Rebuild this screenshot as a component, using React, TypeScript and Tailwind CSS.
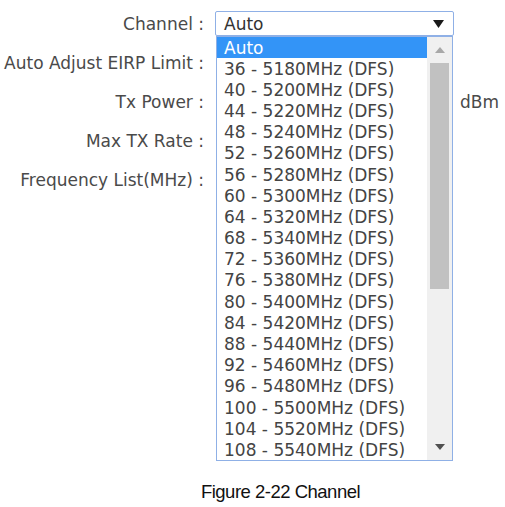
// Wireless settings form with the Channel select opened.

const channels = [
  36, 40, 44, 48, 52, 56, 60, 64, 68, 72, 76, 80, 84, 88, 92, 96, 100, 104, 108,
]

const labels = [
  'Channel :',
  'Auto Adjust EIRP Limit :',
  'Tx Power :',
  'Max TX Rate :',
  'Frequency List(MHz) :',
]

function ChannelSelect() {
  return (
    <div className="relative ml-[10px] w-[239px]">
      <div className="flex h-[25px] items-center justify-between rounded-[2px] border border-[#8fb0e6] bg-white pl-[8px] pr-[9px] text-[#333]">
        <span>Auto</span>
        <svg width="11" height="8" viewBox="0 0 11 8">
          <path d="M0 0h11L5.5 8z" fill="#1a1a1a" />
        </svg>
      </div>

      <div className="absolute left-[1px] top-[25px] flex h-[425px] w-[237px] border border-[#8fb0e6] bg-white">
        <ul className="flex-1">
          <li className="flex h-[21px] items-center bg-[#3394f7] pl-[7px] text-white">Auto</li>
          {channels.map((ch) => (
            <li key={ch} className="flex h-[21.2px] items-center whitespace-nowrap pl-[7px] text-[#444]">
              {ch} - {5000 + ch * 5}MHz (DFS)
            </li>
          ))}
        </ul>
        <div className="flex w-[25px] flex-col items-center bg-[#f0f0f0]">
          <div className="flex h-[26px] w-full items-center justify-center">
            <svg width="10" height="6" viewBox="0 0 10 6">
              <path d="M5 0l5 6H0z" fill="#a8a8a8" />
            </svg>
          </div>
          <div className="h-[226px] w-[19px] bg-[#c1c1c1]" />
          <div className="flex-1" />
          <div className="flex h-[26px] w-full items-center justify-center">
            <svg width="10" height="6" viewBox="0 0 10 6">
              <path d="M0 0h10L5 6z" fill="#505050" />
            </svg>
          </div>
        </div>
      </div>
    </div>
  )
}

export default function App() {
  return (
    <div className="h-[507px] w-[505px] bg-white font-['DejaVu_Sans',Verdana,sans-serif] text-[17px] leading-[20px]">
      <div className="h-[481px] pt-[4px]">
        {labels.map((label, i) => (
          <div key={label} className="flex h-[39px] items-center">
            <div className="w-[205px] whitespace-nowrap pr-[1px] text-right text-[#4a4a4a]">{label}</div>
            {i === 0 && <ChannelSelect />}
            {i === 2 && <div className="ml-[255px] text-[#4a4a4a]">dBm</div>}
          </div>
        ))}
      </div>
      <div className="pl-[56px] text-center font-['Liberation_Sans',Arial,sans-serif] text-[18.5px] leading-[22px] tracking-[-0.5px] text-[#111]">
        Figure 2-22 Channel
      </div>
    </div>
  )
}
